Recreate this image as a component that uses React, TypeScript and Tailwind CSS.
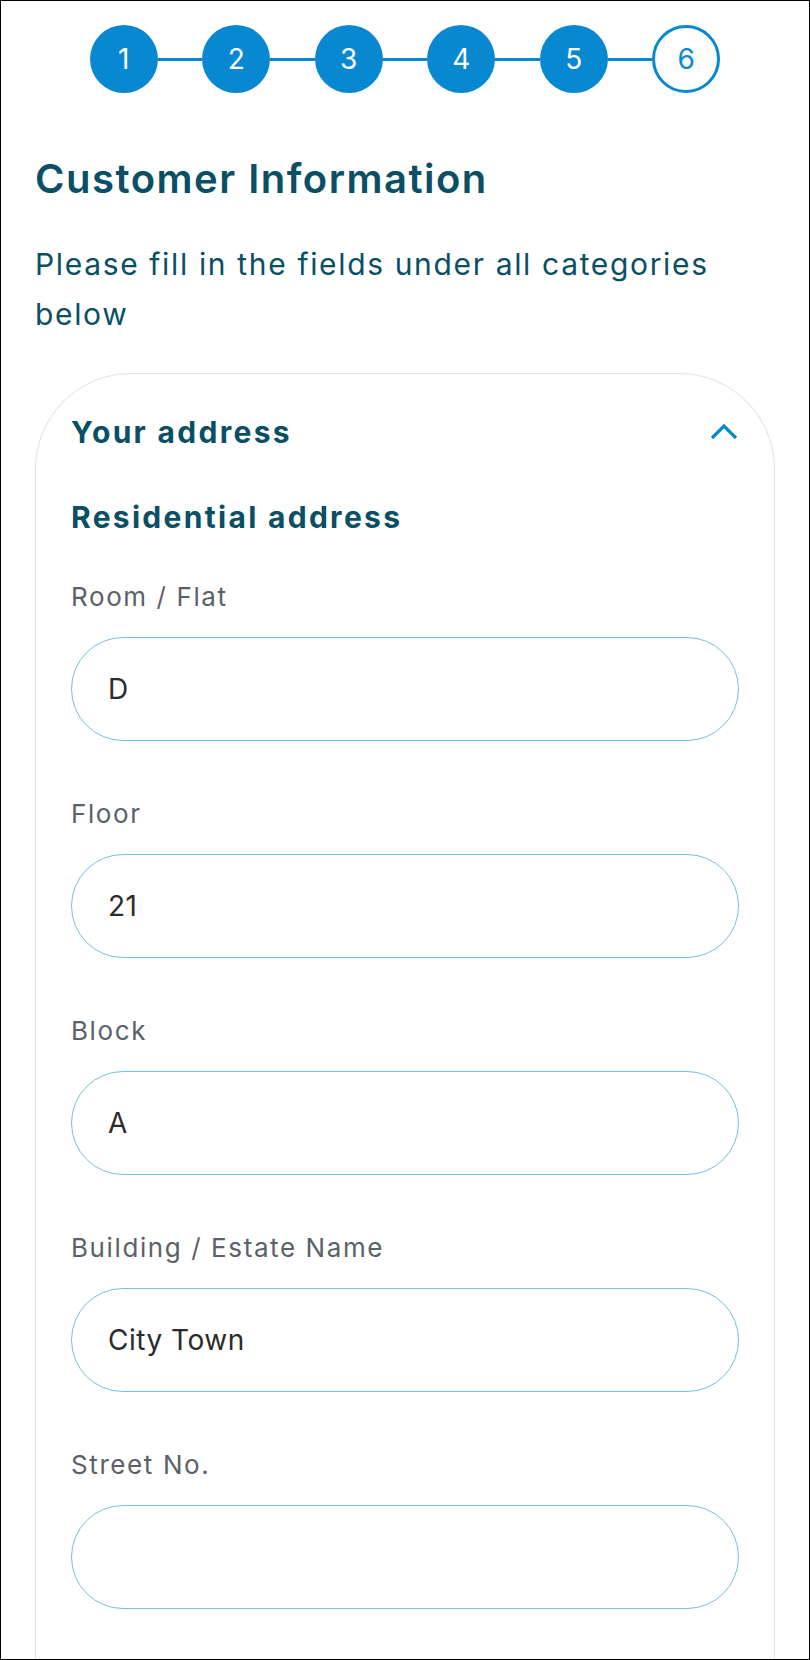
import React from 'react';

const steps = [1, 2, 3, 4, 5, 6];
const current = 6;

const fields = [
  { label: 'Room / Flat', value: 'D' },
  { label: 'Floor', value: '21' },
  { label: 'Block', value: 'A' },
  { label: 'Building / Estate Name', value: 'City Town' },
  { label: 'Street No.', value: '' },
];

const Stepper: React.FC = () => (
  <div className="flex items-center justify-center">
    {steps.map((n, i) => (
      <React.Fragment key={n}>
        {i > 0 && <div className="h-[3px] w-[44.5px] bg-[#0788d1]" />}
        {n === current ? (
          <div className="flex h-[68px] w-[68px] items-center justify-center rounded-full border-[3px] border-[#0788d1] bg-white text-[28px] text-[#0788d1]">
            {n}
          </div>
        ) : (
          <div className="flex h-[68px] w-[68px] items-center justify-center rounded-full bg-[#0788d1] text-[28px] text-white">
            {n}
          </div>
        )}
      </React.Fragment>
    ))}
  </div>
);

const Field: React.FC<{ label: string; value: string }> = ({ label, value }) => (
  <div className="flex flex-col">
    <label className="text-[26px] leading-[32px] tracking-[1.6px] text-[#5b6169]">{label}</label>
    <input
      readOnly
      value={value}
      className="mt-[24px] h-[104px] w-full rounded-full border-[1.5px] border-[#74bfe4] bg-white px-[36px] text-[28px] tracking-[0.5px] text-[#2b2b2b] outline-none"
    />
  </div>
);

export default function App() {
  return (
    <div
      className="h-[1660px] w-[810px] overflow-hidden border border-black bg-white"
      style={{ fontFamily: 'Inter, "Noto Sans", sans-serif' }}
    >
      <div className="pt-[24px]">
        <Stepper />
      </div>

      <div className="px-[34px]">
        <h1 className="mt-[62px] text-[40px] font-semibold leading-[48px] tracking-[1.5px] text-[#0a4f64]">
          Customer Information
        </h1>
        <p className="mt-[36px] text-[30px] leading-[50px] tracking-[1.65px] text-[#0a4f64]">
          Please fill in the fields under all categories below
        </p>

        {/* card runs past the bottom of the viewport */}
        <div className="mt-[34px] rounded-t-[96px] border border-b-0 border-[#e1e3ea] px-[35px] pb-[120px] pt-[40px]">
          <div className="flex h-[36px] items-center justify-between">
            <h2 className="text-[30px] font-bold leading-[36px] tracking-[2.3px] text-[#0a4f64]">
              Your address
            </h2>
            <svg width="28" height="16" viewBox="0 0 28 16" className="mr-[1px]">
              <path d="M2 14 L14 2 L26 14" fill="none" stroke="#0788d1" strokeWidth="3.2" />
            </svg>
          </div>
          <h3 className="mt-[49px] text-[30px] font-bold leading-[36px] tracking-[2.3px] text-[#0a4f64]">
            Residential address
          </h3>
          <div className="mt-[46px] flex flex-col gap-[57px]">
            {fields.map((f) => (
              <Field key={f.label} label={f.label} value={f.value} />
            ))}
          </div>
        </div>
      </div>
    </div>
  );
}
